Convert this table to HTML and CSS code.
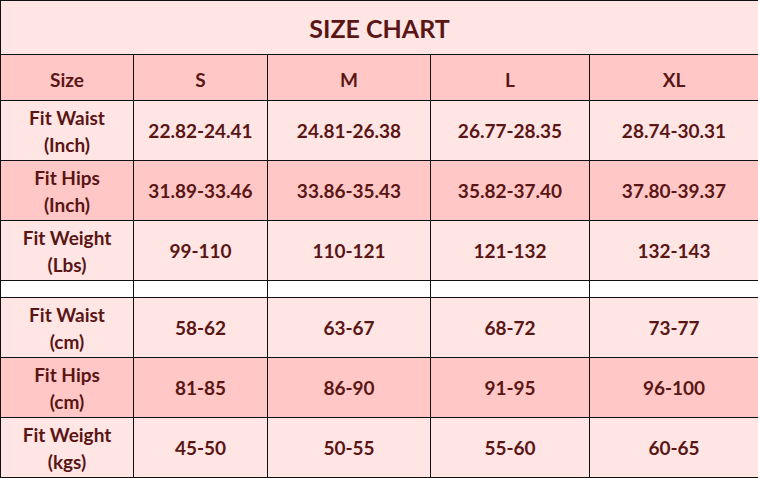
FILE: index.html
```html
<!DOCTYPE html>
<html>
<head>
<meta charset="utf-8">
<link rel="stylesheet" href="styles.css">
</head>
<body>
<table class="chart">
  <colgroup>
    <col class="c1"><col class="c2"><col class="c3"><col class="c4"><col class="c5">
  </colgroup>
  <tr class="title"><td colspan="5">SIZE CHART</td></tr>
  <tr class="head pink"><td>Size</td><td>S</td><td>M</td><td>L</td><td>XL</td></tr>
  <tr class="row light"><td>Fit Waist<br>(Inch)</td><td>22.82-24.41</td><td>24.81-26.38</td><td>26.77-28.35</td><td>28.74-30.31</td></tr>
  <tr class="row pink"><td>Fit Hips<br>(Inch)</td><td>31.89-33.46</td><td>33.86-35.43</td><td>35.82-37.40</td><td>37.80-39.37</td></tr>
  <tr class="row light"><td>Fit Weight<br>(Lbs)</td><td>99-110</td><td>110-121</td><td>121-132</td><td>132-143</td></tr>
  <tr class="blank"><td></td><td></td><td></td><td></td><td></td></tr>
  <tr class="row light"><td>Fit Waist<br>(cm)</td><td>58-62</td><td>63-67</td><td>68-72</td><td>73-77</td></tr>
  <tr class="row pink"><td>Fit Hips<br>(cm)</td><td>81-85</td><td>86-90</td><td>91-95</td><td>96-100</td></tr>
  <tr class="row light"><td>Fit Weight<br>(kgs)</td><td>45-50</td><td>50-55</td><td>55-60</td><td>60-65</td></tr>
</table>
</body>
</html>
```
FILE: styles.css
```css
html, body {
  margin: 0;
  padding: 0;
  background: #ffffff;
}
.chart {
  width: 758px;
  border-collapse: collapse;
  table-layout: fixed;
  font-family: Lato, "Liberation Sans", sans-serif;
  font-weight: 700;
  color: #5a1515;
}
.c1 { width: 133px; }
.c2 { width: 134px; }
.c3 { width: 163px; }
.c4 { width: 159px; }
.c5 { width: 169px; }
.chart td {
  border: 1px solid #111;
  padding: 0;
  text-align: center;
  vertical-align: middle;
  font-size: 19px;
  line-height: 27px;
}
.title td {
  height: 51px;
  background: #ffe6e5;
  font-size: 25px;
  padding-top: 2px;
}
.head td {
  height: 42px;
  padding-top: 3px;
}
.row td { height: 59px; }
.blank td { height: 16px; background: #fff; }
.light td { background: #ffe5e4; }
.pink td { background: #ffc8c6; }
```
